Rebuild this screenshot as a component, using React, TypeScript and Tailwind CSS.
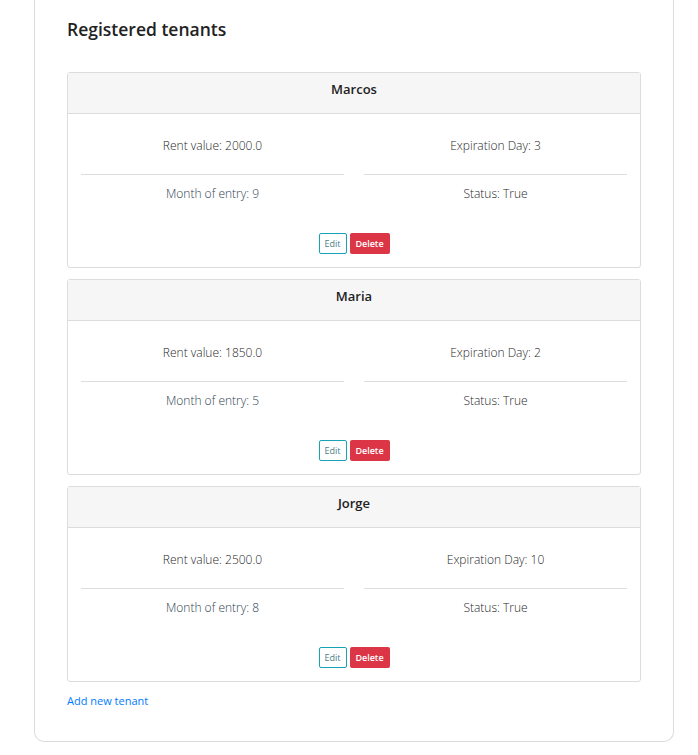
import React from "react";

type Tenant = {
  name: string;
  rent: string;
  expiration: number;
  month: number;
  status: string;
};

const tenants: Tenant[] = [
  { name: "Marcos", rent: "2000.0", expiration: 3, month: 9, status: "True" },
  { name: "Maria", rent: "1850.0", expiration: 2, month: 5, status: "True" },
  { name: "Jorge", rent: "2500.0", expiration: 10, month: 8, status: "True" },
];

const TenantCard = ({ tenant }: { tenant: Tenant }) => {
  return (
    <div className="border border-[#dcdcdc] rounded-[3px] bg-white">
      <div className="h-[41px] pb-[6px] flex items-center justify-center bg-[#f6f6f6] border-b border-[#dcdcdc] text-[13px] font-semibold text-[#222]">
        {tenant.name}
      </div>
      <div className="px-[13px] pt-[23px] pb-[13px]">
        <div className="grid grid-cols-2 gap-x-[20px]">
          <div className="flex flex-col">
            <p className="h-[17px] leading-[17px] text-center text-[12px] font-light text-[#1f1f1f]">
              Rent value: {tenant.rent}
            </p>
            <div className="mt-[20px] border-t border-[#dedede]" />
            <p className="mt-[10px] h-[17px] leading-[17px] text-center text-[12px] font-light text-[#2c3e50]">
              Month of entry: {tenant.month}
            </p>
          </div>
          <div className="flex flex-col">
            <p className="h-[17px] leading-[17px] text-center text-[12px] font-light text-[#1f1f1f]">
              Expiration Day: {tenant.expiration}
            </p>
            <div className="mt-[20px] border-t border-[#dedede]" />
            <p className="mt-[10px] h-[17px] leading-[17px] text-center text-[12px] font-light text-[#1f1f1f]">
              Status: {tenant.status}
            </p>
          </div>
        </div>
        <div className="mt-[31px] flex justify-center gap-[3px]">
          <button className="h-[21px] w-[28px] border border-[#17a2b8] rounded-[2px] text-[9px] text-[#4a7f88] bg-white">
            Edit
          </button>
          <button className="h-[21px] w-[40px] rounded-[2px] text-[9px] font-semibold text-white bg-[#dc3545]">
            Delete
          </button>
        </div>
      </div>
    </div>
  );
};

export default function App() {
  return (
    <div
      className="min-h-[755px] bg-white pl-[34px] pr-[24px]"
      style={{ fontFamily: '"Open Sans", "Noto Sans", sans-serif' }}
    >
      <div className="w-[640px] border-x border-b border-[#dcdcdc] rounded-b-[10px] px-[32px] pb-[32px]">
        <h2 className="pt-[17px] h-[72px] text-[17.5px] font-semibold text-[#222] leading-[24px]">
          Registered tenants
        </h2>
        <div className="flex flex-col gap-[11px]">
          {tenants.map((t) => (
            <TenantCard key={t.name} tenant={t} />
          ))}
        </div>
        <a
          href="#"
          className="block mt-[11px] h-[16px] leading-[16px] text-[11px] text-[#007bff]"
        >
          Add new tenant
        </a>
      </div>
    </div>
  );
}
